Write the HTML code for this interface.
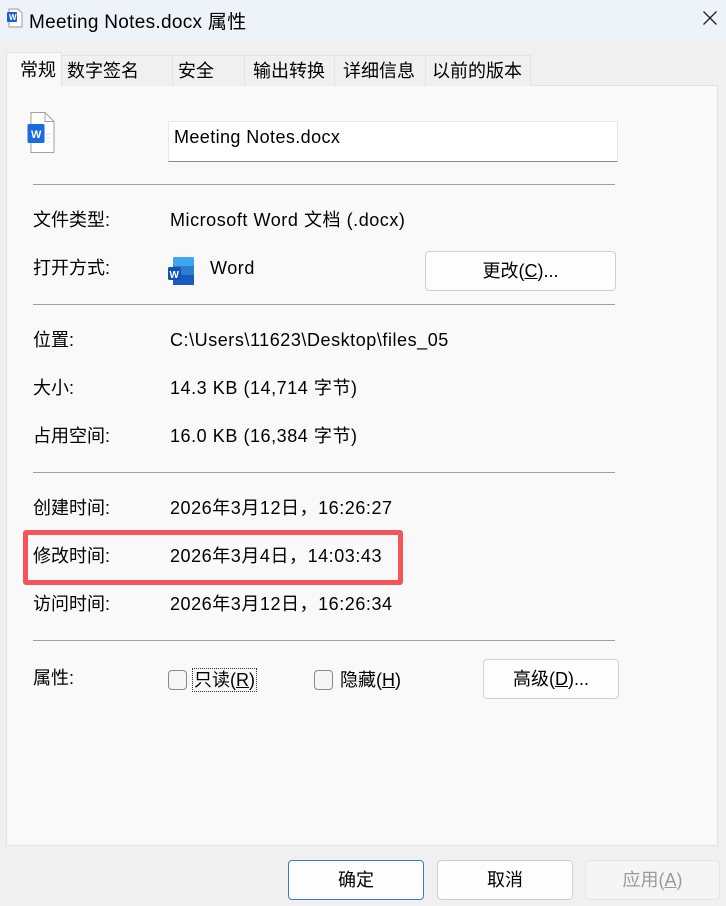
<!DOCTYPE html>
<html><head><meta charset="utf-8"><style>
*{margin:0;padding:0;box-sizing:border-box}
body{width:726px;height:906px;background:#f0f0f0;position:relative;overflow:hidden;font-family:"Liberation Sans","Noto Sans CJK SC",sans-serif;font-size:18px;color:#000}
.a{position:absolute;white-space:nowrap}
.title{left:0;top:0;width:726px;height:40px;background:#eef2f9}
.tab{position:absolute;top:55px;height:31px;background:#f0f0f0;border:1px solid #e3e3e3;border-bottom:none;font-size:18px;line-height:30px;padding-left:5px}
.panel{left:6px;top:85px;width:712px;height:761px;background:#f9f9f9;border:1px solid #e2e2e2}
.sep{position:absolute;left:33px;width:582px;height:1px;background:#a0a0a0}
.lbl{position:absolute;left:33px;line-height:24px}
.val{position:absolute;left:170px;line-height:24px;letter-spacing:0.55px}
.btn{position:absolute;background:#fdfdfd;border:1px solid #d0d0d0;border-radius:4px;text-align:center;font-size:18px}
.cb{position:absolute;width:19px;height:20px;border:1px solid #888;border-radius:4px;background:#f6f6f6}
</style></head><body>
<div class="a title"></div>
<svg class="a" style="left:7px;top:8px" width="16" height="20" viewBox="0 0 16 20"><path d="M2 1h9l4 4v14H2z" fill="#fff" stroke="#9a9a9a"/><rect x="0" y="4" width="10" height="10" rx="1" fill="#1a5fd6"/><text x="2" y="12" font-size="8" fill="#fff" font-family="Liberation Sans" font-weight="bold">W</text></svg>
<div class="a" style="left:29px;top:7px;font-size:19px;letter-spacing:0.3px">Meeting Notes.docx 属性</div>
<svg class="a" style="left:703px;top:11px" width="14" height="14" viewBox="0 0 14 14"><path d="M0.5 0.5L13.5 13.5M13.5 0.5L0.5 13.5" stroke="#222" stroke-width="1.3"/></svg>
<div class="a panel"></div>
<div class="tab" style="left:61px;width:112px">数字签名</div>
<div class="tab" style="left:172px;width:73px">安全</div>
<div class="tab" style="left:244px;width:91px;padding-left:8px">输出转换</div>
<div class="tab" style="left:334px;width:92px;padding-left:8px">详细信息</div>
<div class="tab" style="left:425px;width:106px;padding-left:6px">以前的版本</div>
<div class="tab" style="left:6px;top:52px;width:56px;height:35px;background:#f9f9f9;border-color:#e2e2e2;padding-left:13px;line-height:34px">常规</div>
<svg class="a" style="left:27px;top:112px" width="28" height="42" viewBox="0 0 28 42"><path d="M4 0.5h14l9 9v31H4z" fill="#fff" stroke="#a0a0a0"/><path d="M18 0.5v9h9" fill="none" stroke="#a0a0a0"/><rect x="0.5" y="12" width="17" height="19" rx="1.5" fill="#1a6be0"/><text x="4" y="26" font-size="11" fill="#fff" font-family="Liberation Sans" font-weight="bold">W</text><path d="M19 22h5M19 26h5M19 30h5" stroke="#dfe6f3"/></svg>
<div class="a" style="left:168px;top:121px;width:450px;height:41px;background:#fff;border:1px solid #e8e8e8;border-bottom:1px solid #888;padding:5px 0 0 5px;font-size:18px;letter-spacing:0.4px">Meeting Notes.docx</div>
<div class="sep" style="top:184px"></div>
<div class="lbl" style="top:208px">文件类型:</div><div class="val" style="top:208px">Microsoft Word 文档 (.docx)</div>
<div class="lbl" style="top:256px">打开方式:</div>
<svg class="a" style="left:168px;top:257px" width="27" height="28" viewBox="0 0 27 28"><rect x="5" y="0" width="21" height="28" rx="2" fill="#2b7cd3"/><rect x="5" y="0" width="21" height="9" rx="2" fill="#41a5ee"/><rect x="5" y="18" width="21" height="10" fill="#185abd"/><rect x="0" y="10" width="13" height="13" rx="1.5" fill="#1351b4"/><text x="1.5" y="21" font-size="10" fill="#fff" font-weight="bold" font-family="Liberation Sans">W</text></svg>
<div class="val" style="top:256px;left:210px">Word</div>
<div class="btn" style="left:425px;top:251px;width:191px;height:40px;line-height:38px">更改(<u>C</u>)...</div>
<div class="sep" style="top:304px"></div>
<div class="lbl" style="top:328px">位置:</div><div class="val" style="top:328px">C:\Users\11623\Desktop\files_05</div>
<div class="lbl" style="top:376px">大小:</div><div class="val" style="top:376px">14.3 KB (14,714 字节)</div>
<div class="lbl" style="top:424px">占用空间:</div><div class="val" style="top:424px">16.0 KB (16,384 字节)</div>
<div class="sep" style="top:472px"></div>
<div class="lbl" style="top:496px">创建时间:</div><div class="val" style="top:496px">2026年3月12日，16:26:27</div>
<div class="lbl" style="top:544px">修改时间:</div><div class="val" style="top:544px">2026年3月4日，14:03:43</div>
<div class="a" style="left:23px;top:530px;width:380px;height:55px;border:5px solid #f5555a;border-radius:3px"></div>
<div class="lbl" style="top:592px">访问时间:</div><div class="val" style="top:592px">2026年3月12日，16:26:34</div>
<div class="sep" style="top:640px"></div>
<div class="lbl" style="top:666px">属性:</div>
<div class="cb" style="left:168px;top:670px"></div>
<div class="a" style="left:192px;top:668px;border:1px dotted #333;line-height:22px;padding:0 1px">只读(<u>R</u>)</div>
<div class="cb" style="left:314px;top:670px"></div>
<div class="a" style="left:340px;top:669px;line-height:22px">隐藏(<u>H</u>)</div>
<div class="btn" style="left:483px;top:659px;width:136px;height:40px;line-height:38px">高级(<u>D</u>)...</div>
<div class="btn" style="left:288px;top:860px;width:136px;height:40px;line-height:38px;border-color:#3a7bd5">确定</div>
<div class="btn" style="left:437px;top:860px;width:136px;height:40px;line-height:38px">取消</div>
<div class="btn" style="left:585px;top:860px;width:135px;height:40px;line-height:38px;background:#f5f5f5;border-color:#e5e5e5;color:#9a9a9a">应用(<u>A</u>)</div>
</body></html>
